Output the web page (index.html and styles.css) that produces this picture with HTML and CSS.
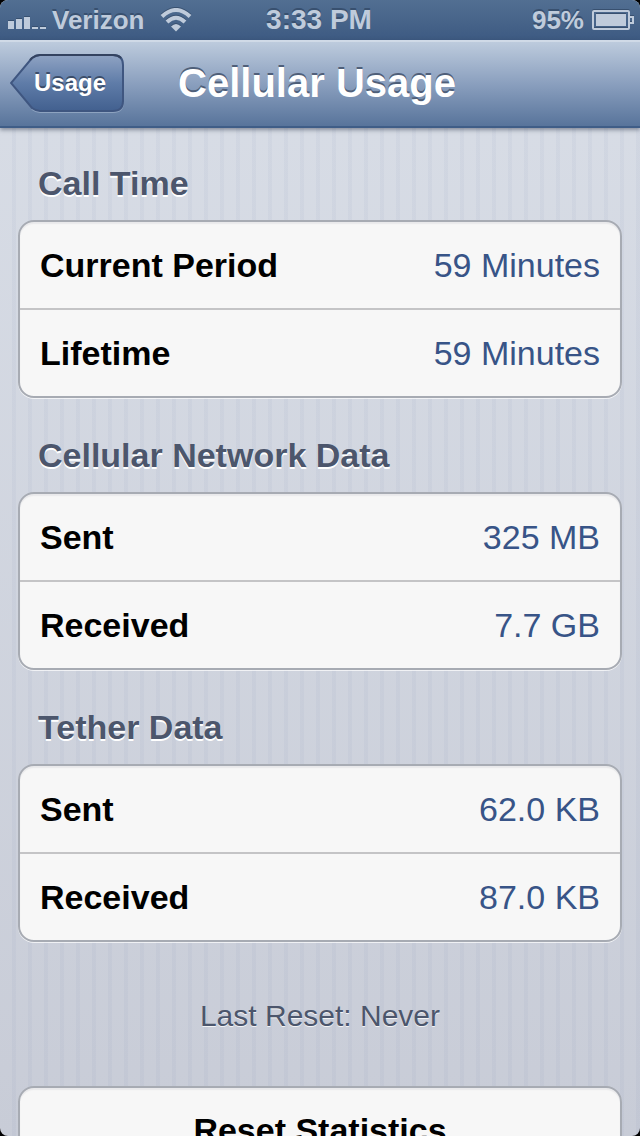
FILE: index.html
```html
<!DOCTYPE html>
<html lang="en">
<head>
<meta charset="utf-8">
<meta name="viewport" content="width=device-width, initial-scale=1">
<title>Cellular Usage</title>
<link rel="stylesheet" href="styles.css">
</head>
<body>
<div class="screen">
  <div class="status-bar">
    <div class="status-left">
      <svg class="signal" width="38" height="12" viewBox="0 0 38 12" aria-label="Signal strength">
        <path d="M0 4h6v8H0zM8 2h6v10H8zM16 0h6v12h-6zM24 10h6v2h-6zM32 10h6v2h-6z"/>
      </svg>
      <span>Verizon</span>
      <svg class="wifi" width="32" height="24" viewBox="0 0 32 24" aria-label="Wi-Fi">
        <path class="wifi-arc" d="M2 8.500Q16-4.500 30 8.500"/>
        <path class="wifi-arc" d="M7 14Q16 5.500 25 14"/>
        <path class="wifi-dot" d="M11 18.500Q16 13.500 21 18.500L16 23.500Z"/>
      </svg>
    </div>
    <span class="clock">3:33 PM</span>
    <div class="status-right">
      <span>95%</span>
      <svg class="battery" width="42" height="20" viewBox="0 0 42 20" aria-label="Battery">
        <rect class="battery-outline" x="1" y="1" width="36" height="18" rx="1"/>
        <path class="battery-outline" d="M38 7h3v6h-3"/>
        <rect class="battery-fill" x="4" y="4" width="30" height="12"/>
      </svg>
    </div>
  </div>
  <header class="nav-bar">
    <button class="back" type="button">
      <svg class="back-shape" width="115" height="60" viewBox="0 0 115 60" aria-hidden="true">
        <defs>
          <linearGradient id="back-fill" x1="0" y1="0" x2="0" y2="1">
            <stop offset="0" stop-color="#8fa3c3"/>
            <stop offset=".5" stop-color="#5f7ca8"/>
            <stop offset="1" stop-color="#42608f"/>
          </linearGradient>
        </defs>
        <path class="back-highlight" d="M22 55Q26 58 30 58H103Q113 58 113 48"/>
        <path class="back-outline" d="M22 4Q26 1 30 1H103Q113 1 113 11V47Q113 57 103 57H30Q26 57 22 54L1 29Z"/>
        <path class="back-top" d="M20 6L22 4Q26 1 30 1H103Q108 1 111 4"/>
      </svg>
      <span class="back-label">Usage</span>
    </button>
    <h1 class="title">Cellular Usage</h1>
  </header>
  <main class="content">
    <section>
      <h2 class="heading">Call Time</h2>
      <dl class="card">
        <div class="row"><dt>Current Period</dt><dd>59 Minutes</dd></div>
        <div class="row"><dt>Lifetime</dt><dd>59 Minutes</dd></div>
      </dl>
    </section>
    <section>
      <h2 class="heading">Cellular Network Data</h2>
      <dl class="card">
        <div class="row"><dt>Sent</dt><dd>325 MB</dd></div>
        <div class="row"><dt>Received</dt><dd>7.7 GB</dd></div>
      </dl>
    </section>
    <section>
      <h2 class="heading">Tether Data</h2>
      <dl class="card">
        <div class="row"><dt>Sent</dt><dd>62.0 KB</dd></div>
        <div class="row"><dt>Received</dt><dd>87.0 KB</dd></div>
      </dl>
    </section>
    <p class="note">Last Reset: Never</p>
    <button class="card reset" type="button">Reset Statistics</button>
  </main>
</div>
</body>
</html>
```
FILE: styles.css
```css
* {
  box-sizing: border-box;
}

body {
  margin: 0;
  background: #000;
  font-family: "Liberation Sans", Arial, Helvetica, sans-serif;
}

.screen {
  display: flex;
  flex-direction: column;
  height: 100vh;
  overflow: hidden;
  border-radius: 8px;
  background:
    repeating-linear-gradient(90deg, transparent 0 12px, rgba(90, 110, 160, 0.05) 12px 16px),
    linear-gradient(#d9dee7, #c8ccd7);
}

.status-bar {
  display: grid;
  grid-template-columns: 1fr auto 1fr;
  align-items: center;
  flex: none;
  height: 40px;
  padding: 0 6px 0 8px;
  background: linear-gradient(#526f92, #3d5a82);
  color: #bfcbdb;
  font-size: 26px;
  font-weight: bold;
  text-shadow: 0 -2px 0 #38506f;
}

.status-left,
.status-right {
  display: flex;
  align-items: center;
}

.status-left {
  gap: 6px;
}

.status-right {
  justify-content: flex-end;
  gap: 8px;
}

.clock {
  padding-right: 4px;
  font-size: 28px;
  line-height: 32px;
}

.signal,
.wifi,
.battery {
  flex: none;
  filter: drop-shadow(0 -1px 0 #38506f);
}

.signal {
  margin-top: 6px;
  fill: #bfcbdb;
}

.wifi {
  margin-left: 10px;
}

.wifi-arc {
  fill: none;
  stroke: #bfcbdb;
  stroke-width: 4;
}

.wifi-dot,
.battery-fill {
  fill: #bfcbdb;
}

.battery-outline {
  fill: none;
  stroke: #bfcbdb;
  stroke-width: 2;
}

.nav-bar {
  display: grid;
  grid-template-columns: 1fr auto 1fr;
  align-items: center;
  flex: none;
  height: 88px;
  padding: 0 16px 0 10px;
  border-top: 2px solid #d0dae7;
  border-bottom: 2px solid #3f5d87;
  background: linear-gradient(#bdcbdd, #8a9fbe 50%, #58749b);
  box-shadow: 0 2px 4px rgba(50, 60, 80, 0.5);
}

.back {
  display: grid;
  justify-self: start;
  align-items: center;
  padding: 0;
  border: 0;
  background: none;
  color: #fff;
  font: bold 24px/28px "Liberation Sans", Arial, Helvetica, sans-serif;
  text-shadow: 0 -2px 0 #3b4d69;
}

.back-shape,
.back-label {
  grid-area: 1 / 1;
}

.back-label {
  padding: 0 0 2px 5px;
}

.back-highlight {
  fill: none;
  stroke: #8ea3c0;
  stroke-width: 2;
}

.back-outline {
  fill: url(#back-fill);
  stroke: #3f5680;
  stroke-width: 2;
}

.back-top {
  fill: none;
  stroke: #344360;
  stroke-width: 2;
}

.title {
  margin: 0;
  color: #fff;
  font-size: 40px;
  line-height: 46px;
  padding-bottom: 2px;
  text-shadow: 0 -2px 0 #4f5f79;
}

.content {
  flex: 1;
  min-height: 0;
  overflow: auto;
  scrollbar-width: none;
  padding: 0 18px 40px;
}

.heading {
  margin: 0;
  padding: 37px 20px 17px;
  color: #4c566c;
  font-size: 34px;
  line-height: 40px;
  text-shadow: 0 2px 0 #fff;
}

section:first-child .heading {
  padding-top: 35px;
}

.card {
  margin: 0;
  border: 2px solid #a7abb3;
  border-radius: 16px;
  background: #f7f7f7;
  box-shadow: 0 1px 0 rgba(255, 255, 255, 0.7), inset 0 2px 1px #e9e9eb;
}

.row {
  display: flex;
  justify-content: space-between;
  gap: 20px;
  padding: 23px 20px;
  font-size: 34px;
  line-height: 40px;
}

.row + .row {
  border-top: 2px solid #c4c4c6;
}

dt {
  color: #000;
  font-weight: bold;
}

dd {
  margin: 0;
  color: #385487;
}

.note {
  margin: 0;
  padding: 56px 0 52px;
  color: #4c566c;
  font-size: 30px;
  line-height: 36px;
  text-align: center;
  text-shadow: 0 1px 0 rgba(255, 255, 255, 0.8);
}

.reset {
  display: block;
  width: 100%;
  padding: 22px 20px;
  color: #000;
  font: bold 34px/40px "Liberation Sans", Arial, Helvetica, sans-serif;
}
```
